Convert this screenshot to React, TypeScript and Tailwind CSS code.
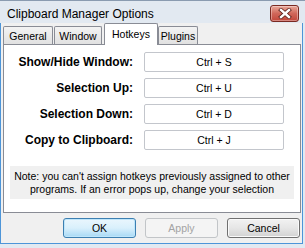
import React from 'react';

const rows = [
  { label: 'Show/Hide Window:', keys: 'Ctrl + S' },
  { label: 'Selection Up:', keys: 'Ctrl + U' },
  { label: 'Selection Down:', keys: 'Ctrl + D' },
  { label: 'Copy to Clipboard:', keys: 'Ctrl + J' },
];

const CloseButton = () => (
  <div className="w-[29px] h-[17px] rounded-[3px] border border-[#7a2a22] bg-gradient-to-b from-[#e9a99b] via-[#d0675a] to-[#c2463a] flex items-center justify-center shadow-[inset_0_0_0_1px_rgba(255,255,255,0.35)]">
    <svg width="14" height="11" viewBox="0 0 14 11">
      <path d="M3 2 L11 9 M11 2 L3 9" stroke="#5a1e18" strokeWidth="4" strokeLinecap="square" />
      <path d="M3 2 L11 9 M11 2 L3 9" stroke="#ffffff" strokeWidth="2.4" strokeLinecap="square" />
    </svg>
  </div>
);

const Tab = ({ label, className }: { label: string; className: string }) => (
  <div
    className={`h-[18px] bg-gradient-to-b from-[#f3f3f3] to-[#e1e1e1] border border-b-0 border-[#898c95] rounded-t-[2px] text-[10.5px] leading-none flex justify-center items-start pt-[4px] ${className}`}
  >
    {label}
  </div>
);

export default function App() {
  return (
    <div className="w-[305px] h-[248px] bg-[#e2e9f1] overflow-hidden font-['Liberation_Sans',Arial,sans-serif] text-black">
      {/* title bar */}
      <div className="h-[24px] flex items-start justify-between pl-[7px] pr-[6px] border-t border-[#8a9bb0]">
        <span className="text-[12px] leading-none mt-[7px]">Clipboard Manager Options</span>
        <div className="mt-[4px]">
          <CloseButton />
        </div>
      </div>

      {/* client area */}
      <div className="w-[303px] h-[221px] -mt-[1px] bg-[#f0f0f0] border-l border-r border-b border-[#4d95d8] flex flex-col">
        {/* tabs */}
        <div className="h-[21px] flex items-end pl-[2px] relative z-10">
          <Tab label="General" className="w-[50px] mr-[1px]" />
          <Tab label="Window" className="w-[48px] mr-[2px]" />
          <div className="w-[54px] h-[22px] -mb-[1px] bg-white border border-b-0 border-[#898c95] rounded-t-[2px] text-[10.5px] leading-none flex justify-center items-start pt-[5px]">
            Hotkeys
          </div>
          <Tab label="Plugins" className="w-[40px]" />
        </div>

        {/* panel */}
        <div className="ml-[2px] w-[298px] h-[169px] bg-white border border-[#898c95] pt-[7px] px-[6px]">
          <div className="flex flex-col gap-[6px]">
            {rows.map((r) => (
              <div key={r.label} className="flex items-center">
                <span className="w-[129px] -ml-[6px] text-right font-bold text-[12px] leading-none">{r.label}</span>
                <div className="ml-[11px] w-[140px] h-[20px] rounded-[2px] border border-[#c3c6cc] bg-white flex items-center justify-center text-[10.5px] leading-none">
                  {r.keys}
                </div>
              </div>
            ))}
          </div>
          <div className="mt-[16px] h-[33px] bg-[#f0f0f0] flex flex-col items-center justify-center text-[10.5px] leading-[13px] text-center">
            <span>Note: you can't assign hotkeys previously assigned to other</span>
            <span>programs. If an error pops up, change your selection</span>
          </div>
        </div>

        {/* buttons */}
        <div className="flex justify-end gap-[9px] pr-[2px] mt-[5px]">
          <button className="w-[73px] h-[20px] rounded-[3px] border border-[#3c7fb1] bg-gradient-to-b from-[#eaf6fd] via-[#d9f0fc] to-[#a7d9f5] shadow-[inset_0_0_0_1px_#bfe6fb] text-[10.5px] leading-none">
            OK
          </button>
          <button className="w-[73px] h-[20px] rounded-[3px] border border-[#c2c5c8] bg-[#f4f4f4] text-[#a3a3a3] text-[10.5px] leading-none">
            Apply
          </button>
          <button className="w-[73px] h-[20px] rounded-[3px] border border-[#707070] bg-gradient-to-b from-[#f2f2f2] via-[#e6e6e6] to-[#d2d2d2] shadow-[inset_0_0_0_1px_#fafafa] text-[10.5px] leading-none">
            Cancel
          </button>
        </div>
      </div>
    </div>
  );
}
